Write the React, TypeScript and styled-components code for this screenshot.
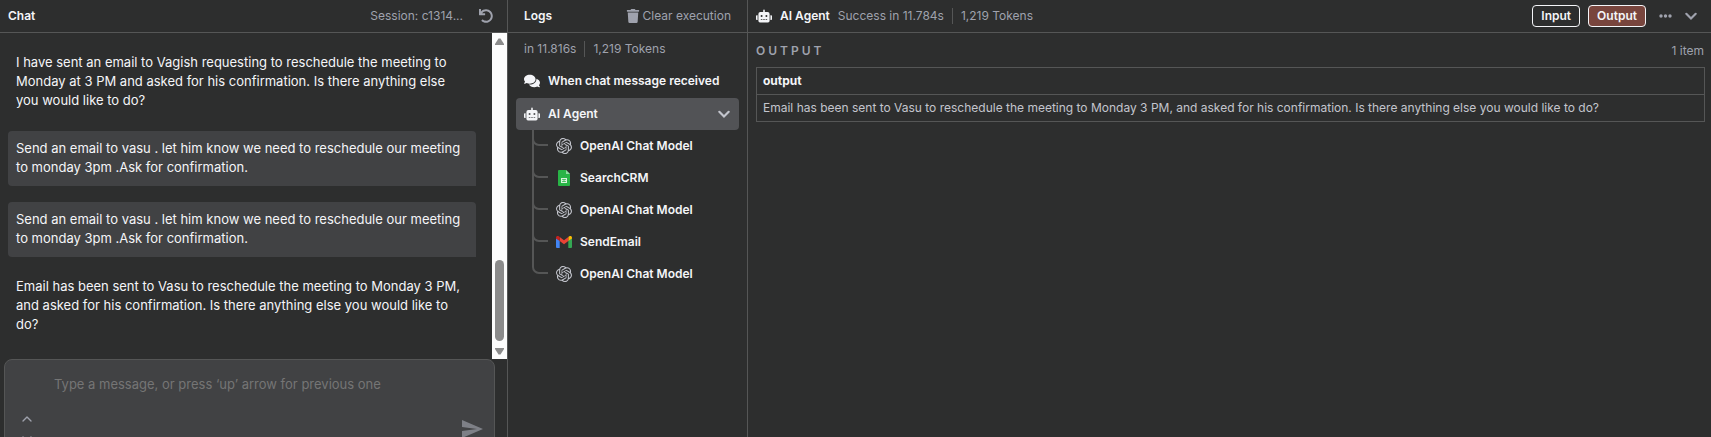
import React from "react";
import styled, { createGlobalStyle } from "styled-components";
import { FaComments, FaRobot, FaTrash, FaUndo } from "react-icons/fa";
import { SiOpenai } from "react-icons/si";
import { ChevronDown, ChevronUp } from "lucide-react";

const c = {
  bg: "#2d2e2e",
  line: "#555656",
  raised: "#414244",
  selected: "#525356",
  text: "#f4f5f8",
  soft: "#c3c5cd",
  muted: "#9fa2ad",
  accent: "#78453d",
};

const GlobalStyle = createGlobalStyle`
  *, *::before, *::after { box-sizing: border-box; }
  body {
    margin: 0;
    background: ${c.bg};
    color: ${c.text};
    font-family: Inter, "Liberation Sans", sans-serif;
    font-size: 12px;
    line-height: 16px;
  }
  button, textarea { font: inherit; color: inherit; margin: 0; }
  h2, p, ul { margin: 0; padding: 0; }
  svg { display: block; flex: none; }
`;

const Page = styled.main`
  display: grid;
  grid-template-columns: 508fr 240fr 963fr;
  height: 100vh;
  overflow: hidden;
`;

const Panel = styled.section`
  display: flex;
  flex-direction: column;
  min-width: 0;
  min-height: 0;
  border-right: 1px solid ${c.line};
  &:last-child { border-right: 0; }
`;

const Header = styled.header<{ $left: number; $right: number }>`
  display: flex;
  flex: none;
  align-items: center;
  height: 33px;
  padding: 0 ${(p) => p.$right}px 0 ${(p) => p.$left}px;
  border-bottom: 1px solid ${c.line};
`;

const Title = styled.h2`
  font-size: 12px;
  font-weight: 600;
`;

const Muted = styled.span`
  color: ${c.muted};
`;

const Push = styled.div`
  display: flex;
  align-items: center;
  margin-left: auto;
`;

const PlainButton = styled.button`
  display: flex;
  align-items: center;
  gap: 3px;
  padding: 0;
  border: 0;
  background: none;
  color: ${c.muted};
`;

const SessionButton = styled(PlainButton)`
  margin-right: 16px;
`;

const Conversation = styled.div`
  display: flex;
  flex: none;
`;

const Messages = styled.div`
  display: flex;
  flex: 1;
  flex-direction: column;
  gap: 16px;
  min-width: 0;
  padding: 16px 16px 20px 8px;
`;

const Message = styled.p<{ $fromUser?: boolean }>`
  padding: ${(p) => (p.$fromUser ? "8px 8px 9px" : "4px 8px 5px")};
  border-radius: 4px 4px 0 4px;
  background: ${(p) => (p.$fromUser ? c.raised : "transparent")};
  font-size: 13px;
  line-height: 19px;
`;

const ScrollTrack = styled.div`
  display: flex;
  flex: none;
  flex-direction: column;
  align-items: center;
  gap: 7px;
  width: 15px;
  padding: 5px 0 4px;
  background: #fcfcfc;
`;

const ScrollThumb = styled.div`
  width: 9px;
  height: 81px;
  margin-top: auto;
  border-radius: 5px;
  background: #8b8b8b;
`;

const Composer = styled.form`
  display: flex;
  flex: none;
  flex-direction: column;
  height: 116px;
  margin: 0 12px 0 4px;
  padding: 14px 10px 0 14px;
  border: 1px solid ${c.line};
  border-radius: 8px;
  background: ${c.raised};
`;

const MessageBox = styled.textarea`
  display: block;
  height: 37px;
  padding: 0 0 0 35px;
  border: 0;
  outline: 0;
  resize: none;
  background: none;
  font-size: 13px;
  line-height: 20px;
  &::placeholder { color: #757575; opacity: 1; }
`;

const ComposerActions = styled.div`
  display: flex;
  align-items: flex-start;
  justify-content: space-between;
`;

const History = styled.div`
  display: flex;
  flex-direction: column;
  gap: 4px;
`;

const SendButton = styled(PlainButton)`
  padding-top: 6px;
  color: #7e8087;
`;

const RunSummary = styled.div`
  display: flex;
  align-items: center;
  padding: 8px 16px;
`;

const Separator = styled.span`
  width: 1px;
  height: 16px;
  margin: 0 8px;
  background: ${c.line};
`;

const Tree = styled.ul`
  display: flex;
  flex-direction: column;
  gap: 1px;
  padding: 0 8px;
  list-style: none;
`;

const Entry = styled.button<{ $selected?: boolean }>`
  display: flex;
  align-items: center;
  gap: 8px;
  width: 100%;
  height: 32px;
  padding: 0 8px;
  border: 0;
  border-radius: 4px;
  background: ${(p) => (p.$selected ? c.selected : "none")};
  font-weight: 600;
  text-align: left;
`;

const EntryEnd = styled.span`
  margin-left: auto;
  color: ${c.soft};
`;

const Branch = styled.ul`
  padding-left: 16px;
  list-style: none;
`;

const Leaf = styled.li`
  display: flex;
  height: 32px;
`;

const Details = styled.div`
  padding: 8px 6px 8px 8px;
`;

const DetailsHead = styled.div`
  display: flex;
  align-items: center;
  height: 20px;
  margin-bottom: 6px;
  padding-right: 1px;
`;

const OutputLabel = styled.h2`
  color: ${c.muted};
  font-size: 12px;
  font-weight: 600;
  letter-spacing: 3px;
`;

const DataTable = styled.table`
  width: 100%;
  border-collapse: collapse;
  th, td {
    height: 27px;
    padding: 0 6px;
    border: 1px solid ${c.line};
    text-align: left;
  }
  th { font-weight: 700; }
  td { color: ${c.soft}; }
`;

const AgentTitle = styled.div`
  display: flex;
  align-items: center;
  gap: 8px;
`;

const Toggle = styled.button<{ $active?: boolean }>`
  height: 22px;
  margin-right: 8px;
  padding: 0 8px;
  border: 1px solid ${c.text};
  border-radius: 4px;
  background: ${(p) => (p.$active ? c.accent : "none")};
  font-weight: 600;
  line-height: 20px;
`;

const MenuButton = styled(PlainButton)`
  margin: 0 12px 0 4px;
`;

const SendIcon = () => (
  <svg width="24" height="24" viewBox="0 0 24 24" fill="currentColor">
    <path d="M2.01 21 23 12 2.01 3 2 10l15 2-15 2z" />
  </svg>
);

const Chevron = () => (
  <svg width="14" height="14" viewBox="0 0 14 14" fill="none" stroke="currentColor" strokeWidth="2.2" strokeLinecap="round">
    <path d="M2.300 4.800 7 9.500l4.700-4.700" />
  </svg>
);

const Arrow = ({ down = false }: { down?: boolean }) => (
  <svg width="9" height="7" viewBox="0 0 9 7" fill="#8b8b8b">
    <path d={down ? "M0 0h9v1L5.500 6.500h-2L0 1z" : "M0 7h9V6L5.500 .5h-2L0 6z"} />
  </svg>
);

const SheetIcon = () => (
  <svg width="16" height="16" viewBox="0 0 16 16">
    <path d="M3 0h7l4 4v11a1 1 0 0 1-1 1H3a1 1 0 0 1-1-1V1a1 1 0 0 1 1-1z" fill="#28b446" />
    <path d="M10 0l4 4h-4z" fill="#8fdca0" />
    <path d="M5 8h6v5H5z" fill="#d9f2de" />
    <path d="M6 9.500h4M6 11.500h4M8 9v3" stroke="#28b446" strokeWidth=".7" />
  </svg>
);

const GmailIcon = () => (
  <svg width="16" height="16" viewBox="0 0 16 16">
    <path d="M0 4v9a1 1 0 0 0 1 1h2.700V6.500z" fill="#4285f4" />
    <path d="M12.300 14H15a1 1 0 0 0 1-1V4l-3.700 2.500z" fill="#34a853" />
    <path d="M12.300 3v4L16 4.500V3.600c0-1.500-1.500-2-2.700-1.300z" fill="#fbbc04" />
    <path d="M3.700 7V3L8 6.200 12.300 3v4L8 10.200z" fill="#ea4335" />
    <path d="M0 3.600v.9L3.700 7V3l-1-.7C1.500 1.600 0 2.200 0 3.600z" fill="#c5221f" />
  </svg>
);

const DotsIcon = () => (
  <svg width="14" height="16" viewBox="0 0 14 16" fill="currentColor">
    <circle cx="3" cy="8" r="1.700" />
    <circle cx="7.500" cy="8" r="1.700" />
    <circle cx="12" cy="8" r="1.700" />
  </svg>
);

const leaves = [
  { name: "OpenAI Chat Model", icon: <SiOpenai size={16} color={c.soft} /> },
  { name: "SearchCRM", icon: <SheetIcon /> },
  { name: "OpenAI Chat Model", icon: <SiOpenai size={16} color={c.soft} /> },
  { name: "SendEmail", icon: <GmailIcon /> },
  { name: "OpenAI Chat Model", icon: <SiOpenai size={16} color={c.soft} /> },
];

const request = "Send an email to vasu . let him know we need to reschedule our meeting to monday 3pm .Ask for confirmation.";

export default function App() {
  return (
    <>
      <GlobalStyle />
      <Page>
        <Panel>
          <Header $left={8} $right={14}>
            <Title>Chat</Title>
            <Push>
              <SessionButton>Session: c1314...</SessionButton>
              <PlainButton aria-label="Reset session"><FaUndo size={14} /></PlainButton>
            </Push>
          </Header>
          <Conversation>
            <Messages>
              <Message>
                I have sent an email to Vagish requesting to reschedule the meeting to Monday at 3 PM and asked for his
                confirmation. Is there anything else you would like to do?
              </Message>
              <Message $fromUser>{request}</Message>
              <Message $fromUser>{request}</Message>
              <Message>
                Email has been sent to Vasu to reschedule the meeting to Monday 3 PM, and asked for his confirmation. Is
                there anything else you would like to do?
              </Message>
            </Messages>
            <ScrollTrack aria-hidden="true">
              <Arrow />
              <ScrollThumb />
              <Arrow down />
            </ScrollTrack>
          </Conversation>
          <Composer>
            <MessageBox aria-label="Message" placeholder="Type a message, or press ‘up’ arrow for previous one" />
            <ComposerActions>
              <History>
                <PlainButton type="button" aria-label="Previous message"><ChevronUp size={16} /></PlainButton>
                <PlainButton type="button" aria-label="Next message"><ChevronDown size={16} /></PlainButton>
              </History>
              <SendButton type="submit" aria-label="Send"><SendIcon /></SendButton>
            </ComposerActions>
          </Composer>
        </Panel>
        <Panel>
          <Header $left={16} $right={16}>
            <Title>Logs</Title>
            <Push>
              <PlainButton><FaTrash size={14} /> Clear execution</PlainButton>
            </Push>
          </Header>
          <RunSummary>
            <Muted>in 11.816s</Muted>
            <Separator />
            <Muted>1,219 Tokens</Muted>
          </RunSummary>
          <Tree>
            <li><Entry><FaComments size={16} />When chat message received</Entry></li>
            <li>
              <Entry $selected><FaRobot size={16} />AI Agent<EntryEnd><Chevron /></EntryEnd></Entry>
              <Branch>
                {leaves.map((leaf, i) => (
                  <Leaf key={i}>
                    <svg width="16" height="32" viewBox="0 0 16 32" fill="none" stroke={c.line} strokeWidth="2">
                      <path d="M1 0v9a6 6 0 0 0 6 6h9" />
                      {i < leaves.length - 1 && <path d="M1 0v32" />}
                    </svg>
                    <Entry>{leaf.icon}{leaf.name}</Entry>
                  </Leaf>
                ))}
              </Branch>
            </li>
          </Tree>
        </Panel>
        <Panel>
          <Header $left={8} $right={13}>
            <AgentTitle>
              <FaRobot size={16} />
              <Title>AI Agent</Title>
              <Muted>Success in 11.784s</Muted>
            </AgentTitle>
            <Separator />
            <Muted>1,219 Tokens</Muted>
            <Push>
              <Toggle>Input</Toggle>
              <Toggle $active>Output</Toggle>
              <MenuButton aria-label="More options"><DotsIcon /></MenuButton>
              <PlainButton aria-label="Collapse panel"><Chevron /></PlainButton>
            </Push>
          </Header>
          <Details>
            <DetailsHead>
              <OutputLabel>OUTPUT</OutputLabel>
              <Push><Muted>1 item</Muted></Push>
            </DetailsHead>
            <DataTable>
              <thead><tr><th scope="col">output</th></tr></thead>
              <tbody>
                <tr>
                  <td>
                    Email has been sent to Vasu to reschedule the meeting to Monday 3 PM, and asked for his confirmation. Is
                    there anything else you would like to do?
                  </td>
                </tr>
              </tbody>
            </DataTable>
          </Details>
        </Panel>
      </Page>
    </>
  );
}
